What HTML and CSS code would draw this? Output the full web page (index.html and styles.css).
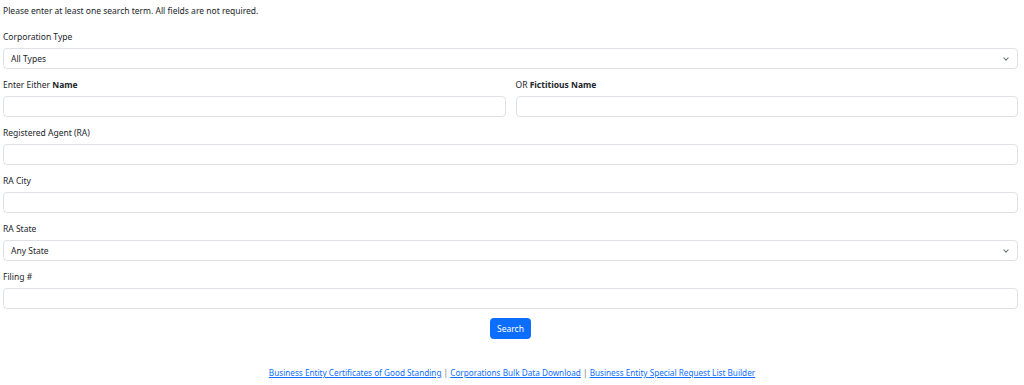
FILE: index.html
```html
<!DOCTYPE html>
<html lang="en">

<head>
  <meta charset="UTF-8" />
  <meta name="viewport" content="width=device-width, initial-scale=1.0" />
  <title>Corporation Search</title>
  <link rel="stylesheet" href="styles.css">
</head>

<body>
  <form class="search-form">
    <p class="intro">Please enter at least one search term. All fields are not required.</p>

    <div class="field">
      <label>Corporation Type</label>
      <div class="select">All Types</div>
    </div>

    <div class="field-row">
      <div class="field">
        <label>Enter Either <b>Name</b></label>
        <div class="input"></div>
      </div>
      <div class="field">
        <label>OR <b>Fictitious Name</b></label>
        <div class="input"></div>
      </div>
    </div>

    <div class="field">
      <label>Registered Agent (RA)</label>
      <div class="input"></div>
    </div>

    <div class="field">
      <label>RA City</label>
      <div class="input"></div>
    </div>

    <div class="field">
      <label>RA State</label>
      <div class="select">Any State</div>
    </div>

    <div class="field">
      <label>Filing #</label>
      <div class="input"></div>
    </div>

    <div class="actions">
      <button type="button" class="btn">Search</button>
    </div>
  </form>

  <div class="links">
    <a href="#">Business Entity Certificates of Good Standing</a> |
    <a href="#">Corporations Bulk Data Download</a> |
    <a href="#">Business Entity Special Request List Builder</a>
  </div>
</body>

</html>
```

FILE: styles.css
```css
* {
  box-sizing: border-box;
}

body {
  margin: 0;
  font-family: "Noto Sans", "Open Sans", sans-serif;
  font-size: 8.5px;
  line-height: 12px;
  color: #212529;
  background: #fff;
}

.search-form {
  padding: 5px 6px 0 3px;
}

.intro {
  margin: 0 0 14px 0;
}

.field {
  margin-bottom: 10px;
}

.field label {
  display: block;
  margin-bottom: 5px;
}

.field label b {
  font-weight: 700;
}

.field-row {
  display: grid;
  grid-template-columns: 1fr 1fr;
  gap: 10px;
}

.input,
.select {
  height: 21px;
  border: 1px solid #dee2e6;
  border-radius: 4px;
  background: #fff;
}

.select {
  position: relative;
  padding: 0 7px;
  line-height: 19px;
}

.select::after {
  content: "";
  position: absolute;
  right: 9px;
  top: 7px;
  width: 3px;
  height: 3px;
  border-right: 1px solid #6c757d;
  border-bottom: 1px solid #6c757d;
  transform: rotate(45deg);
}

.actions {
  display: flex;
  justify-content: center;
  margin-top: -1px;
}

.btn {
  height: 21px;
  padding: 0 7px;
  border: none;
  border-radius: 4px;
  background: #0d6efd;
  color: #fff;
  font: inherit;
  cursor: pointer;
}

.links {
  margin-top: 28px;
  text-align: center;
  font-size: 8.2px;
  color: #6c757d;
}

.links a {
  color: #0d6efd;
}
```
